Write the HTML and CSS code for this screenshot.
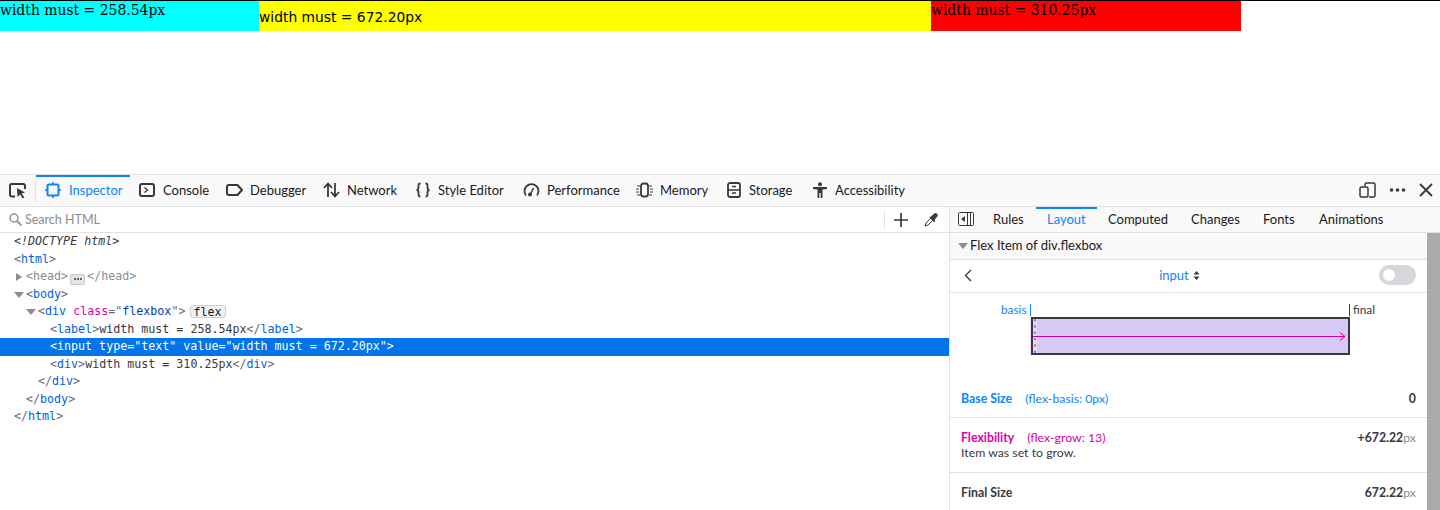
FILE: index.html
```html
<!DOCTYPE html>
<html lang="en">
<head>
<meta charset="utf-8">
<title>Flexbox inspector</title>
<link rel="stylesheet" href="styles.css">
</head>
<body>
<main class="page">
  <div class="flexbox">
    <div class="cell cyan">width must = 258.54px</div>
    <div class="cell-input">width must = 672.20px</div>
    <div class="cell red">width must = 310.25px</div>
  </div>
</main>
<section class="toolbox">
  <header class="toolbar">
    <div class="pick"><svg width="18" height="16" viewBox="0 0 18 16"><path d="M6 13.500H3A1.800 1.800 0 0 1 1 11.700V3A1.800 1.800 0 0 1 3 1h11a1.800 1.800 0 0 1 2 2v3" fill="none" stroke="#38383d" stroke-width="2"/><path d="M8 5l8 4.500-3.300 1 2.600 4-1.700 1-2.400-4L8.500 14z" fill="#38383d"/></svg></div>
    <div class="tab wide active"><svg width="16" height="16" viewBox="0 0 16 16"><rect x="2.500" y="2.500" width="11" height="11" rx="1.500" fill="none" stroke="#0a84ff" stroke-width="2"/><path d="M8 0v3M8 13v3M0 8h3M13 8h3" stroke="#0a84ff" stroke-width="1.600"/></svg><span>Inspector</span></div>
    <div class="tab wide"><svg width="16" height="16" viewBox="0 0 16 16"><rect x="1" y="2" width="14" height="12" rx="2" fill="none" stroke="#38383d" stroke-width="2"/><path d="M5.500 5.500L8.500 8l-3 2.500" fill="none" stroke="#38383d" stroke-width="1.400"/></svg><span>Console</span></div>
    <div class="tab"><svg width="17" height="16" viewBox="0 0 17 16"><path d="M3 3h8.500L16 8l-4.500 5H3a2 2 0 0 1-2-2V5a2 2 0 0 1 2-2z" fill="none" stroke="#38383d" stroke-width="2" stroke-linejoin="round"/></svg><span>Debugger</span></div>
    <div class="tab"><svg width="17" height="16" viewBox="0 0 17 16"><path d="M5 15V2M1 6l4-4.500L9 6M12 1v13M8 10l4 4.500 4-4.500" fill="none" stroke="#38383d" stroke-width="1.800"/></svg><span>Network</span></div>
    <div class="tab"><svg width="16" height="16" viewBox="0 0 16 16"><path d="M5.500 1.500C3 1.500 3.500 3.500 3.500 5.500S3 8 1.500 8c1.500 0 2 .500 2 2.500s-.500 4 2 4M10.500 1.500c2.500 0 2 2 2 4s.500 2.500 2 2.500c-1.500 0-2 .500-2 2.500s.500 4-2 4" fill="none" stroke="#38383d" stroke-width="1.800"/></svg><span>Style Editor</span></div>
    <div class="tab"><svg width="17" height="16" viewBox="0 0 17 16"><path d="M3 13.500A7 7 0 1 1 14 13.500" fill="none" stroke="#38383d" stroke-width="1.800"/><circle cx="7" cy="12.500" r="2" fill="#38383d"/><path d="M7.500 12L10.500 6" stroke="#38383d" stroke-width="1.500"/></svg><span>Performance</span></div>
    <div class="tab"><svg width="17" height="16" viewBox="0 0 17 16"><rect x="5" y="1.500" width="7" height="13" rx="2.500" fill="none" stroke="#38383d" stroke-width="1.800"/><path d="M1 4h3M0 7h3M0 10h3M1 13h3M13 4h3M14 7h3M14 10h3M13 13h3" stroke="#38383d" stroke-width="1"/></svg><span>Memory</span></div>
    <div class="tab"><svg width="16" height="16" viewBox="0 0 16 16"><rect x="2" y="1" width="12" height="14" rx="2" fill="none" stroke="#38383d" stroke-width="1.800"/><path d="M2 8h12M6 4.500h4M6 11h4" stroke="#38383d" stroke-width="1.500"/></svg><span>Storage</span></div>
    <div class="tab"><svg width="16" height="16" viewBox="0 0 16 16"><circle cx="8" cy="2.200" r="2" fill="#38383d"/><path d="M1 5h14v2l-4.500.500V16H8.700v-5H7.300v5H5.500V7.500L1 7z" fill="#38383d"/></svg><span>Accessibility</span></div>
    <div class="toolbar-end">
      <svg width="17" height="16" viewBox="0 0 17 16"><path d="M6 4V2.500A1.500 1.500 0 0 1 7.500 1h7A1.500 1.500 0 0 1 16 2.500v11a1.500 1.500 0 0 1-1.500 1.500H10" fill="none" stroke="#38383d" stroke-width="1.500"/><rect x="1" y="5" width="8" height="10" rx="1.500" fill="none" stroke="#38383d" stroke-width="1.500"/></svg>
      <svg width="17" height="16" viewBox="0 0 17 16"><circle cx="2.500" cy="8" r="1.800" fill="#38383d"/><circle cx="8.500" cy="8" r="1.800" fill="#38383d"/><circle cx="14.500" cy="8" r="1.800" fill="#38383d"/></svg>
      <svg width="14" height="14" viewBox="0 0 14 14"><path d="M1 1l12 12M13 1L1 13" stroke="#38383d" stroke-width="1.800"/></svg>
    </div>
  </header>
  <div class="split">
    <div class="markup">
      <div class="search">
        <svg width="13" height="13" viewBox="0 0 13 13"><circle cx="5" cy="5" r="4" fill="none" stroke="#8f8f93" stroke-width="1.500"/><path d="M8 8l4.500 4.500" stroke="#8f8f93" stroke-width="1.800"/></svg>
        <span class="search-text">Search HTML</span>
        <span class="search-sep"></span>
        <svg class="plus" width="14" height="14" viewBox="0 0 14 14"><path d="M7 0v14M0 7h14" stroke="#38383d" stroke-width="1.700"/></svg>
        <svg class="dropper" width="14" height="14" viewBox="0 0 14 14"><path d="M1 13l1-3 5-5 2 2-5 5z" fill="none" stroke="#38383d" stroke-width="1"/><path d="M7 3.500L10 .8a1.500 1.500 0 0 1 3 3L10.500 7l1 1L10 9 5.500 4.500 7 3.500z" fill="#38383d"/></svg>
      </div>
      <div class="tree">
        <div class="line i1 doctype">&lt;!DOCTYPE html&gt;</div>
        <div class="line i1">&lt;<b>html</b>&gt;</div>
        <div class="line i2 dim"><i class="tri side"></i>&lt;head&gt;<span class="more"><span class="dot"></span><span class="dot"></span><span class="dot"></span></span>&lt;/head&gt;</div>
        <div class="line i2"><i class="tri down"></i>&lt;<b>body</b>&gt;</div>
        <div class="line i3"><i class="tri down"></i>&lt;<b>div</b> <em>class</em>="<u>flexbox</u>"&gt;<span class="badge">flex</span></div>
        <div class="line i4">&lt;<b>label</b>&gt;<span class="txt">width must = 258.54px</span>&lt;/<b>label</b>&gt;</div>
        <div class="line i4 selected">&lt;input type="text" value="width must = 672.20px"&gt;</div>
        <div class="line i4">&lt;<b>div</b>&gt;<span class="txt">width must = 310.25px</span>&lt;/<b>div</b>&gt;</div>
        <div class="line i3">&lt;/<b>div</b>&gt;</div>
        <div class="line i2">&lt;/<b>body</b>&gt;</div>
        <div class="line i1">&lt;/<b>html</b>&gt;</div>
      </div>
    </div>
    <aside class="side-panel">
      <nav class="side-tabs">
        <svg class="side-toggle" width="16" height="14" viewBox="0 0 16 14"><rect x=".5" y=".5" width="15" height="13" rx="1" fill="none" stroke="#38383d"/><path d="M9.500 1v12M12.500 1v12" stroke="#38383d"/><path d="M7 4v6L3 7z" fill="#38383d"/></svg>
        <span class="stab">Rules</span>
        <span class="stab on">Layout</span>
        <span class="stab">Computed</span>
        <span class="stab">Changes</span>
        <span class="stab">Fonts</span>
        <span class="stab">Animations</span>
      </nav>
      <div class="side-body">
        <div class="content">
          <div class="section-head"><i class="tri down big"></i>Flex Item of div.flexbox</div>
          <div class="item-nav">
            <svg width="8" height="13" viewBox="0 0 8 13"><path d="M7 1L1.500 6.500 7 12" fill="none" stroke="#38383d" stroke-width="1.400"/></svg>
            <span class="item-name">input<svg width="7" height="11" viewBox="0 0 7 11"><path d="M3.500 1L6.500 4.500H.5zM3.500 10L.5 6.500h6z" fill="#38383d"/></svg></span>
            <span class="switch"><span class="knob"></span></span>
          </div>
          <div class="diagram">
            <div class="labels">
              <span class="lab-basis">basis</span>
              <span class="lab-final">final</span>
            </div>
            <svg width="320" height="38" viewBox="0 0 320 38">
              <rect x="0" y="0" width="1" height="38" fill="#fbdcf0"/>
              <rect x="1" y="0" width="319" height="38" fill="#38383d"/>
              <rect x="3" y="2" width="315" height="34" fill="#d4caf3"/>
              <rect x="3" y="2" width="4" height="34" fill="#f5d3ec"/>
              <path d="M5 3.200V36" stroke="#4f8ff7" stroke-width="2.400" stroke-linecap="round" stroke-dasharray="0 6.300"/>
              <path d="M3 19.500H315M310 15.500l5 4-5 4" fill="none" stroke="#cc00aa" stroke-width="1"/>
            </svg>
          </div>
          <div class="row base"><span><strong>Base Size</strong><span class="note">(flex-basis: 0px)</span></span><span class="val">0</span></div>
          <div class="row flexi"><div><div><strong>Flexibility</strong><span class="note">(flex-grow: 13)</span></div><div class="why">Item was set to grow.</div></div><span class="val">+672.22<small>px</small></span></div>
          <div class="row final"><strong>Final Size</strong><span class="val">672.22<small>px</small></span></div>
        </div>
        <div class="scrollbar"></div>
      </div>
    </aside>
  </div>
</section>
</body>
</html>
```
FILE: styles.css
```css
* { box-sizing: border-box; }
html, body { margin: 0; height: 510px; overflow: hidden; background: #fff; }
body { display: flex; flex-direction: column; font: 13px/16px Lato, "Noto Sans", sans-serif; color: #18181a; }
svg { display: block; flex: none; }

.page { height: 174px; flex: none; }
.flexbox { display: flex; height: 31px; border-top: 1px solid #000; font: 13.93px/18px "DejaVu Serif", serif; color: #000; }
.cell { height: 30px; }
.cyan { width: 259px; background: #0ff; }
.cell-input { width: 672px; background: #ff0; font-family: "DejaVu Sans", sans-serif; padding-top: 7px; font-size: 13.85px; }
.red { width: 310px; background: #f00; }

.toolbox { flex: 1; display: flex; flex-direction: column; min-height: 0; border-top: 1px solid #e0e0e2; }
.toolbar { height: 32px; flex: none; background: #f9f9fa; border-bottom: 1px solid #e0e0e2; display: grid; grid-template-columns: 36px 94px 87px 97px 92px 108px 113px 90px 86px 110px 1fr; align-items: stretch; }
.pick { padding-left: 9px; border-right: 1px solid #e0e0e2; margin: 4px 0; display: flex; align-items: center; }
.tab { display: flex; align-items: center; gap: 7px; padding: 0 0 2px 9px; color: #18181a; white-space: nowrap; }
.tab.wide { gap: 8px; }
.tab.active { color: #0a84ff; border-top: 2px solid #0a84ff; padding-bottom: 4px; }
.toolbar-end { display: flex; align-items: center; justify-content: flex-end; gap: 13px; padding: 0 7px 2px 0; }

.split { flex: 1; display: flex; min-height: 0; }
.markup { width: 950px; flex: none; border-right: 1px solid #e0e0e2; }
.search { height: 26px; display: flex; align-items: center; padding-left: 9px; border-bottom: 1px solid #e0e0e2; }
.search-text { margin-left: 3px; color: #8c8c90; font-size: 12.5px; flex: 1; }
.search-sep { width: 1px; height: 18px; background: #e0e0e2; }
.plus { margin-left: 9px; }
.dropper { margin: 0 11px 0 16px; }

.tree { font: 11.67px/17.5px "DejaVu Sans Mono", monospace; color: #6a6a6f; }
.line { height: 17.5px; white-space: pre; position: relative; }
.line b { font-weight: normal; color: #0060df; }
.line em { font-style: normal; color: #dd00a9; }
.line u { text-decoration: none; color: #003eaa; }
.txt { color: #38383d; }
.i1 { padding-left: 14px; }
.i2 { padding-left: 26px; }
.i3 { padding-left: 38px; }
.i4 { padding-left: 50px; }
.doctype { font-style: italic; color: #38383d; }
.dim { color: #8c8c90; }
.selected { background: #0074e8; color: #fff; }
.more { display: inline-flex; align-items: center; justify-content: center; gap: 1px; width: 15px; height: 11px; margin: 0 2px; border: 1px solid #c8c8cc; border-radius: 2px; background: #e6e6e9; vertical-align: 0; }
.dot { width: 2px; height: 2px; border-radius: 50%; background: #38383d; }
.badge { display: inline-block; height: 13px; margin-left: 5px; padding: 0 3px 0 2px; border: 1px solid #d0d0d4; border-radius: 3px; background: #f2f2f4; color: #18181a; line-height: 12px; vertical-align: -1px; }
.tri { position: absolute; width: 0; height: 0; }
.tri.side { left: 16px; top: 5px; border-left: 6px solid #8c8c90; border-top: 4px solid transparent; border-bottom: 4px solid transparent; }
.tri.down { top: 6px; border-top: 6px solid #8c8c90; border-left: 5px solid transparent; border-right: 5px solid transparent; }
.i2 .tri.down { left: 14px; }
.i3 .tri.down { left: 26px; }

.side-panel { flex: 1; display: flex; flex-direction: column; min-width: 0; }
.side-tabs { height: 26px; flex: none; background: #f9f9fa; border-bottom: 1px solid #e0e0e2; display: grid; grid-template-columns: 33px 53px 61px 83px 72px 56px 1fr; align-items: stretch; }
.side-toggle { margin: 5px 0 0 8px; }
.stab { padding: 4px 0 0 11px; white-space: nowrap; color: #18181a; }
.stab:nth-of-type(1) { padding-left: 10px; }
.stab.on { color: #0a84ff; border-top: 2px solid #0a84ff; padding-top: 2px; }
.side-body { flex: 1; display: flex; min-height: 0; }
.content { flex: 1; min-width: 0; }
.scrollbar { width: 13px; background: #ababab; }
.section-head { height: 27px; padding: 4px 0 0 20px; background: #f9f9fa; border-bottom: 1px solid #e0e0e2; position: relative; }
.section-head .tri { left: 8px; top: 10px; }
.item-nav { height: 33px; display: flex; align-items: center; justify-content: space-between; padding: 0 11px 2px 14px; border-bottom: 1px solid #e0e0e2; }
.item-name { display: flex; align-items: center; gap: 4px; color: #0a84ff; margin-left: 8px; }
.switch { width: 37px; height: 20px; border-radius: 10px; background: #d7d7db; padding: 4px; }
.knob { display: block; width: 12px; height: 12px; border-radius: 50%; background: #fff; }
.diagram { height: 98px; padding: 11px 0 0 80px; }
.labels { width: 320px; height: 12px; margin-bottom: 1px; display: flex; justify-content: space-between; font-size: 11.8px; line-height: 12px; border-left: 1px solid #0a84ff; border-right: 1px solid #38383d; }
.lab-basis { color: #0a84ff; margin-left: -30px; }
.lab-final { color: #38383d; margin-right: -26px; }
.row { display: flex; justify-content: space-between; padding: 0 11px; font-size: 12.3px; color: #38383d; border-bottom: 1px solid #e0e0e2; }
.row.base { height: 27px; }
.base strong, .base .note { color: #0a84ff; }
.flexi strong, .flexi .note { color: #dd00a9; }
.note { margin-left: 13px; }
.row.flexi { height: 55px; padding-top: 12px; }
.why { margin-top: -1px; }
.row.final { height: 37px; padding-top: 12px; border-bottom: 0; }
.val { font-weight: 700; }
.val small { font-size: 12.3px; font-weight: 400; color: #8c8c90; }
```
